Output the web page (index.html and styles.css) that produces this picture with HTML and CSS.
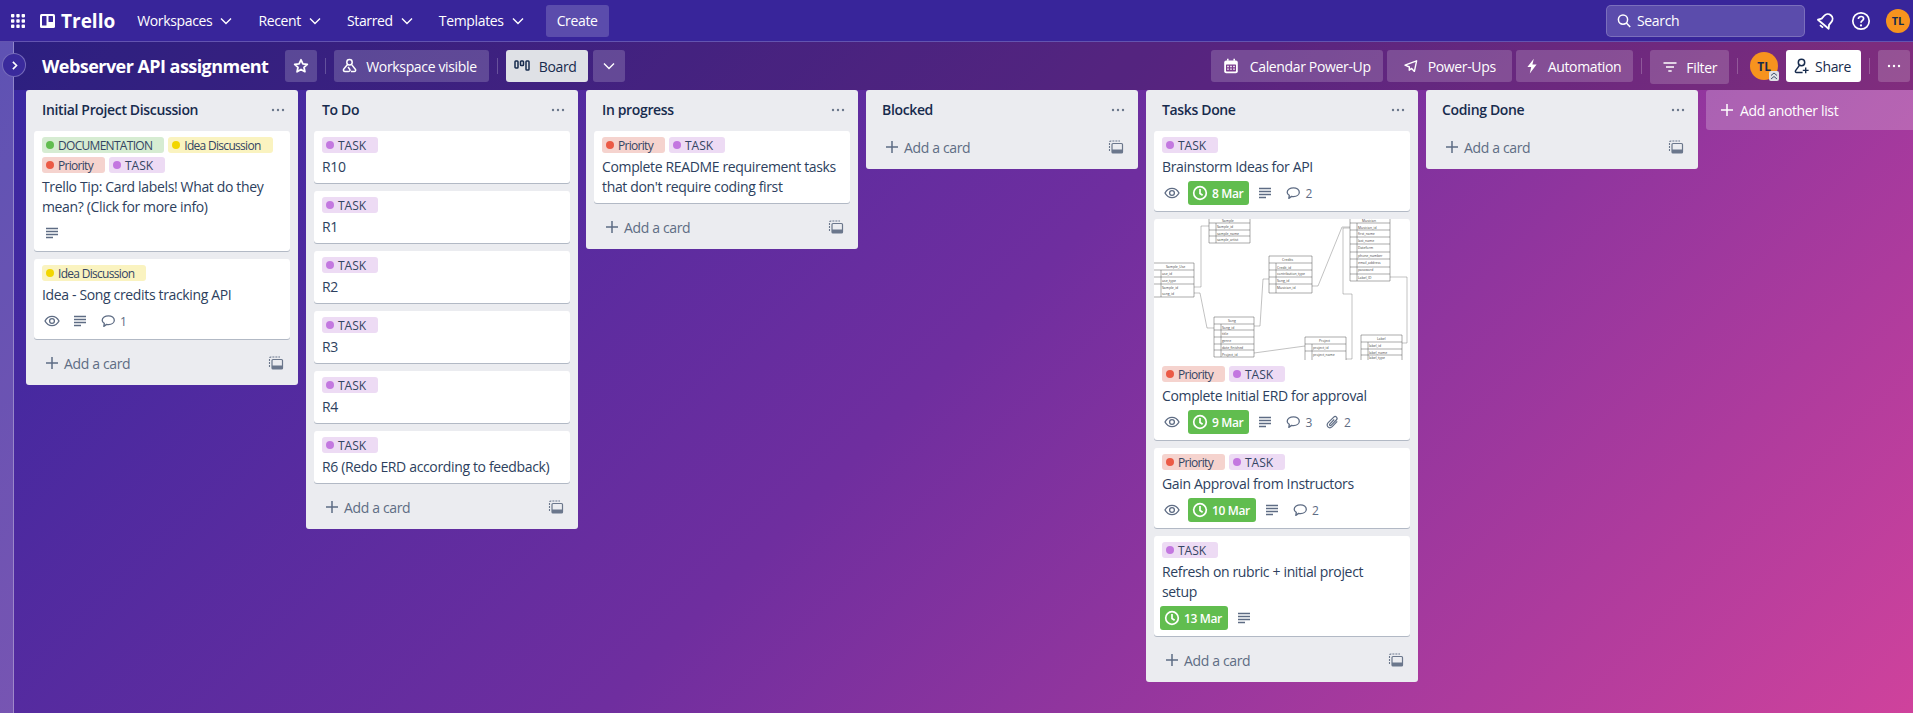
FILE: index.html
```html
<!DOCTYPE html>
<html lang="en">
<head>
    <meta charset="UTF-8">
    <title>Webserver API assignment | Trello</title>
    <link rel="stylesheet" href="styles.css">
</head>
<body>
    <svg class="sprite" xmlns="http://www.w3.org/2000/svg">
        <symbol id="i-chevron" viewBox="0 0 16 16"><path d="M3 5.500l5 5 5-5" fill="none" stroke="currentColor" stroke-width="1.400"/></symbol>
        <symbol id="i-star" viewBox="0 0 16 16"><path d="M8 1.800l1.900 4 4.400.5-3.300 3 .9 4.400L8 11.500l-3.900 2.200.9-4.400-3.300-3 4.400-.5z" fill="none" stroke="currentColor" stroke-width="1.800" stroke-linejoin="round"/></symbol>
        <symbol id="i-people" viewBox="0 0 16 16"><g fill="none" stroke="currentColor" stroke-width="1.500"><circle cx="7.500" cy="4.200" r="2.700"/><path d="M5.500 6.500L1.800 11c-.8 1-.3 2.500 1.200 2.500h3.500c1.500 0 2-1.200 1.200-2.300L6 9"/><path d="M9.700 6.600l3.600 4.600c.8 1 .2 2.300-1 2.300H9"/></g></symbol>
        <symbol id="i-board" viewBox="0 0 16 16"><g fill="none" stroke="currentColor" stroke-width="1.500"><rect x="1" y="3" width="3" height="7" rx=".8"/><rect x="6.500" y="3" width="3" height="4.500" rx=".8"/><rect x="12" y="3" width="3" height="9" rx=".8"/></g></symbol>
        <symbol id="i-calendar" viewBox="0 0 16 16"><path d="M4 .8h1.600v2H4zM10.400.8H12v2h-1.600z" fill="currentColor"/><rect x="1.200" y="2.400" width="13.600" height="12.800" rx="2" fill="currentColor"/><rect x="3" y="6.400" width="10" height="7" rx=".6" fill="#7b3c8f"/><path d="M4.200 7.800h1.600v1.400H4.200zM7.200 7.800h1.600v1.400H7.200zM10.200 7.800h1.600v1.400h-1.600zM4.200 10.400h1.600v1.400H4.200zM7.200 10.400h1.600v1.400H7.200zM10.200 10.400h1.600v1.400h-1.600z" fill="currentColor"/></symbol>
        <symbol id="i-rocket" viewBox="0 0 16 16"><path d="M2 7.200L13.600 2.800 11.400 13.400 8.600 10.400 6.200 12.200 6.400 9z" fill="none" stroke="currentColor" stroke-width="1.400" stroke-linejoin="round"/></symbol>
        <symbol id="i-bell" viewBox="0 0 20 20"><g transform="rotate(40 10 10)" fill="none" stroke="currentColor" stroke-width="1.800" stroke-linejoin="round"><path d="M10 2.500c-3 0-4.800 2.200-4.800 5v3.500L3 14.200h14L14.800 11V7.500c0-2.800-1.800-5-4.800-5z"/><path d="M8 17h4"/></g></symbol>
        <symbol id="i-bolt" viewBox="0 0 16 16"><path d="M9.800.8L3.400 9h3.800l-1.400 6.400L12.600 6.600H8.400z" fill="currentColor"/></symbol>
        <symbol id="i-filter" viewBox="0 0 16 16"><path d="M1.500 4h13M4 8h8M6.300 12h3.400" fill="none" stroke="currentColor" stroke-width="1.500"/></symbol>
        <symbol id="i-share" viewBox="0 0 16 16"><g fill="none" stroke="currentColor" stroke-width="1.500"><circle cx="7.500" cy="4.500" r="3.200"/><path d="M5.400 7.400L1.600 12.600c-.6.9 0 1.900 1 1.900h6"/></g><path d="M11 9.500h1.400v2.200h2.200v1.400h-2.200v2.200H11v-2.200H8.800v-1.400H11z" fill="currentColor"/></symbol>
        <symbol id="i-dots" viewBox="0 0 16 16"><g fill="currentColor"><circle cx="3" cy="8" r="1.200"/><circle cx="8" cy="8" r="1.200"/><circle cx="13" cy="8" r="1.200"/></g></symbol>
        <symbol id="i-search" viewBox="0 0 16 16"><g fill="none" stroke="currentColor" stroke-width="1.500"><circle cx="7" cy="6.600" r="4.600"/><path d="M10.400 10l3.800 4"/></g></symbol>
        <symbol id="i-help" viewBox="0 0 20 20"><circle cx="10" cy="10" r="8.200" fill="none" stroke="currentColor" stroke-width="1.700"/><path d="M7.400 8c0-1.600 1.200-2.500 2.700-2.500s2.500 1 2.500 2.200c0 1.900-2.600 2-2.600 4" fill="none" stroke="currentColor" stroke-width="1.700"/><circle cx="10" cy="14.400" r="1.100" fill="currentColor"/></symbol>
        <symbol id="i-eye" viewBox="0 0 16 16"><g fill="none" stroke="currentColor" stroke-width="1.300"><path d="M1 8c1.600-3 4-4.600 7-4.600S13.400 5 15 8c-1.600 3-4 4.600-7 4.600S2.600 11 1 8z"/><circle cx="8" cy="8" r="2.400"/></g></symbol>
        <symbol id="i-desc" viewBox="0 0 16 16"><path d="M2 3.500h12M2 6.500h12M2 9.500h12M2 12.500h7" fill="none" stroke="currentColor" stroke-width="1.300"/></symbol>
        <symbol id="i-comment" viewBox="0 0 16 16"><path d="M8.500 2.800c3.200 0 5.800 1.900 5.800 4.400s-2.600 4.400-5.800 4.400c-.7 0-1.300-.1-1.900-.2l-2.800 2 .5-3C2.900 9.600 2.200 8.500 2.200 7.200c0-2.500 3-4.400 6.300-4.400z" fill="none" stroke="currentColor" stroke-width="1.300" stroke-linejoin="round"/></symbol>
        <symbol id="i-clip" viewBox="0 0 16 16"><path d="M13.200 7.400l-5 5.200c-1.300 1.300-3.200 1.400-4.300.3s-1-2.900.3-4.200l5.300-5.400c.9-.9 2.200-1 3-.2s.7 2-.2 2.900l-5 5.200c-.5.5-1.100.5-1.500.1s-.3-1 .2-1.500l4.200-4.300" fill="none" stroke="currentColor" stroke-width="1.200"/></symbol>
        <symbol id="i-clock" viewBox="0 0 16 16"><g fill="none" stroke="currentColor" stroke-width="1.700"><circle cx="8" cy="8" r="6.300"/><path d="M8 4v4.500l2.600 1.800"/></g></symbol>
        <symbol id="i-plus" viewBox="0 0 16 16"><path d="M8 2v12M2 8h12" fill="none" stroke="currentColor" stroke-width="1.500"/></symbol>
        <symbol id="i-template" viewBox="0 0 16 16"><path d="M1.500 12V3.500c0-1 .5-1.500 1.500-1.500h9" fill="none" stroke="currentColor" stroke-width="1.100" stroke-dasharray="2 1"/><rect x="4" y="4.500" width="10.500" height="9.500" rx="1" fill="none" stroke="currentColor" stroke-width="1.200"/><rect x="4" y="10.500" width="10.500" height="3.500" fill="currentColor"/></symbol>
    </svg>

    <header class="topnav">
        <svg class="apps" viewBox="0 0 14 14"><g fill="#fff"><rect width="3.400" height="3.400" rx=".8"/><rect x="5.300" width="3.400" height="3.400" rx=".8"/><rect x="10.600" width="3.400" height="3.400" rx=".8"/><rect y="5.300" width="3.400" height="3.400" rx=".8"/><rect x="5.300" y="5.300" width="3.400" height="3.400" rx=".8"/><rect x="10.600" y="5.300" width="3.400" height="3.400" rx=".8"/><rect y="10.600" width="3.400" height="3.400" rx=".8"/><rect x="5.300" y="10.600" width="3.400" height="3.400" rx=".8"/><rect x="10.600" y="10.600" width="3.400" height="3.400" rx=".8"/></g></svg>
        <div class="logo">
            <svg class="logo-mark" viewBox="0 0 15 14"><rect width="15" height="14" rx="1.500" fill="#fff"/><rect x="2" y="2" width="4.500" height="9.500" rx=".6" fill="#38259a"/><rect x="8.500" y="2" width="4.500" height="6" rx=".6" fill="#38259a"/></svg>
            <span>Trello</span>
        </div>
        <nav class="nav-menu">
            <a class="nav-item">Workspaces <svg class="ico"><use href="#i-chevron"/></svg></a>
            <a class="nav-item">Recent <svg class="ico"><use href="#i-chevron"/></svg></a>
            <a class="nav-item">Starred <svg class="ico"><use href="#i-chevron"/></svg></a>
            <a class="nav-item">Templates <svg class="ico"><use href="#i-chevron"/></svg></a>
            <a class="create-btn">Create</a>
        </nav>
        <div class="nav-right">
            <div class="search"><svg class="ico"><use href="#i-search"/></svg><span>Search</span></div>
            <svg class="nav-icon bell"><use href="#i-bell"/></svg>
            <svg class="nav-icon help"><use href="#i-help"/></svg>
            <div class="avatar avatar-small">TL</div>
        </div>
    </header>

    <div class="workspace">
        <aside class="sidebar"></aside>
        <button class="sidebar-toggle"><svg viewBox="0 0 16 16"><path d="M6 3.500L10.500 8 6 12.500" fill="none" stroke="#fff" stroke-width="2"/></svg></button>

        <main class="board">
            <div class="board-header">
                <div class="header-group">
                    <h1 class="board-title">Webserver API assignment</h1>
                    <a class="hbtn icon-btn"><svg class="ico"><use href="#i-star"/></svg></a>
                    <span class="sep"></span>
                    <a class="hbtn"><svg class="ico"><use href="#i-people"/></svg>Workspace visible</a>
                    <span class="sep"></span>
                    <a class="hbtn hbtn-light"><svg class="ico"><use href="#i-board"/></svg>Board</a>
                    <a class="hbtn icon-btn"><svg class="ico"><use href="#i-chevron"/></svg></a>
                </div>
                <div class="header-group">
                    <a class="hbtn calendar-btn"><svg class="ico"><use href="#i-calendar"/></svg>Calendar Power-Up</a>
                    <a class="hbtn powerups-btn"><svg class="ico"><use href="#i-rocket"/></svg>Power-Ups</a>
                    <a class="hbtn"><svg class="ico"><use href="#i-bolt"/></svg>Automation</a>
                    <span class="sep"></span>
                    <a class="hbtn filter-btn"><svg class="ico"><use href="#i-filter"/></svg>Filter</a>
                    <span class="sep"></span>
                    <div class="avatar avatar-member">TL<svg class="admin-mark" viewBox="0 0 10 10"><rect width="10" height="10" rx="2" fill="#dfe1e6"/><path d="M2 4.500l3-2.500 3 2.500M2 8l3-2.500L8 8" fill="none" stroke="#42526e" stroke-width="1"/></svg></div>
                    <a class="hbtn hbtn-white"><svg class="ico"><use href="#i-share"/></svg>Share</a>
                    <span class="sep"></span>
                    <a class="hbtn icon-btn last-btn"><svg class="ico"><use href="#i-dots"/></svg></a>
                </div>
            </div>

            <div class="lists">
                <section class="list">
                    <div class="list-head"><h2>Initial Project Discussion</h2><svg class="ico"><use href="#i-dots"/></svg></div>
                    <article class="card">
                        <div class="labels">
                            <span class="label green">DOCUMENTATION</span>
                            <span class="label yellow">Idea Discussion</span>
                            <span class="label red">Priority</span>
                            <span class="label purple">TASK</span>
                        </div>
                        <p class="card-title">Trello Tip: Card labels! What do they mean? (Click for more info)</p>
                        <div class="badges"><span class="badge"><svg class="ico"><use href="#i-desc"/></svg></span></div>
                    </article>
                    <article class="card">
                        <div class="labels"><span class="label yellow">Idea Discussion</span></div>
                        <p class="card-title">Idea - Song credits tracking API</p>
                        <div class="badges">
                            <span class="badge"><svg class="ico"><use href="#i-eye"/></svg></span>
                            <span class="badge"><svg class="ico"><use href="#i-desc"/></svg></span>
                            <span class="badge"><svg class="ico"><use href="#i-comment"/></svg><em>1</em></span>
                        </div>
                    </article>
                    <div class="add-card"><svg class="ico"><use href="#i-plus"/></svg><span>Add a card</span><svg class="ico tpl"><use href="#i-template"/></svg></div>
                </section>

                <section class="list">
                    <div class="list-head"><h2>To Do</h2><svg class="ico"><use href="#i-dots"/></svg></div>
                    <article class="card"><div class="labels"><span class="label purple">TASK</span></div><p class="card-title">R10</p></article>
                    <article class="card"><div class="labels"><span class="label purple">TASK</span></div><p class="card-title">R1</p></article>
                    <article class="card"><div class="labels"><span class="label purple">TASK</span></div><p class="card-title">R2</p></article>
                    <article class="card"><div class="labels"><span class="label purple">TASK</span></div><p class="card-title">R3</p></article>
                    <article class="card"><div class="labels"><span class="label purple">TASK</span></div><p class="card-title">R4</p></article>
                    <article class="card"><div class="labels"><span class="label purple">TASK</span></div><p class="card-title">R6 (Redo ERD according to feedback)</p></article>
                    <div class="add-card"><svg class="ico"><use href="#i-plus"/></svg><span>Add a card</span><svg class="ico tpl"><use href="#i-template"/></svg></div>
                </section>

                <section class="list">
                    <div class="list-head"><h2>In progress</h2><svg class="ico"><use href="#i-dots"/></svg></div>
                    <article class="card">
                        <div class="labels"><span class="label red">Priority</span><span class="label purple">TASK</span></div>
                        <p class="card-title">Complete README requirement tasks that don't require coding first</p>
                    </article>
                    <div class="add-card"><svg class="ico"><use href="#i-plus"/></svg><span>Add a card</span><svg class="ico tpl"><use href="#i-template"/></svg></div>
                </section>

                <section class="list">
                    <div class="list-head"><h2>Blocked</h2><svg class="ico"><use href="#i-dots"/></svg></div>
                    <div class="add-card"><svg class="ico"><use href="#i-plus"/></svg><span>Add a card</span><svg class="ico tpl"><use href="#i-template"/></svg></div>
                </section>

                <section class="list">
                    <div class="list-head"><h2>Tasks Done</h2><svg class="ico"><use href="#i-dots"/></svg></div>
                    <article class="card">
                        <div class="labels"><span class="label purple">TASK</span></div>
                        <p class="card-title">Brainstorm Ideas for API</p>
                        <div class="badges">
                            <span class="badge"><svg class="ico"><use href="#i-eye"/></svg></span>
                            <span class="due"><svg class="ico"><use href="#i-clock"/></svg>8 Mar</span>
                            <span class="badge"><svg class="ico"><use href="#i-desc"/></svg></span>
                            <span class="badge"><svg class="ico"><use href="#i-comment"/></svg><em>2</em></span>
                        </div>
                    </article>
                    <article class="card">
                        <div class="card-cover">
                            <svg class="erd" viewBox="0 0 256 141">
                                <path class="erd-links" d="M40 68h7V7h8M40 74h6l7 35h7M100 107h6l3-47h6M158 67h6l24-59h8M100 134l51-7M192 140h6V75h-9V9h7M236 58h17v66h-5"/>
                                <g class="erd-tables">
                                    <path d="M55 0v24h41V0M55 4h41M55 11h41M55 17h41M62 4v20"/>
                                    <path d="M0 44h40v34H0M0 51h40M0 58h40M0 65h40M7 51v27"/>
                                    <path d="M115 37h43v37h-43zM115 44h43M115 51h43M115 58h43M115 65h43M122 44v30"/>
                                    <path d="M196 0v62h40V0M196 4h40M196 11h40M196 18h40M196 25h40M196 33h40M196 40h40M196 48h40M196 55h40M203 4v58"/>
                                    <path d="M60 98h40v40H60zM60 105h40M60 111h40M60 118h40M60 125h40M60 131h40M67 105v33"/>
                                    <path d="M151 141v-23h41v23M151 125h41M151 132h41M158 125v16"/>
                                    <path d="M207 141v-25h41v25M207 123h41M207 130h41M207 136h41M214 123v18"/>
                                </g>
                                <g class="erd-text">
                                    <text x="68" y="3">Sample</text><text x="63" y="9">Sample_id</text><text x="63" y="15.500">sample_name</text><text x="63" y="22">sample_artist</text>
                                    <text x="12" y="49">Sample_Use</text><text x="8" y="56">use_id</text><text x="8" y="63">use_type</text><text x="8" y="70">Sample_id</text><text x="8" y="76">song_id</text>
                                    <text x="128" y="42">Credits</text><text x="123" y="49.500">Credit_id</text><text x="123" y="56">contribution_type</text><text x="123" y="63">Song_id</text><text x="123" y="70">Musician_id</text>
                                    <text x="208" y="3">Musician</text><text x="204" y="9.500">Musician_id</text><text x="204" y="16">first_name</text><text x="204" y="23">last_name</text><text x="204" y="30">Dateform</text><text x="204" y="38">phone_number</text><text x="204" y="45">email_address</text><text x="204" y="52">password</text><text x="204" y="60">Label_ID</text>
                                    <text x="74" y="103">Song</text><text x="68" y="110">Song_id</text><text x="68" y="116">title</text><text x="68" y="123">genre</text><text x="68" y="130">date_finished</text><text x="68" y="136.500">Project_id</text>
                                    <text x="165" y="123">Project</text><text x="159" y="130">project_id</text><text x="159" y="137">project_name</text>
                                    <text x="223" y="121">Label</text><text x="215" y="128">label_id</text><text x="215" y="134.500">label_name</text><text x="215" y="140">label_type</text>
                                </g>
                            </svg>
                        </div>
                        <div class="labels"><span class="label red">Priority</span><span class="label purple">TASK</span></div>
                        <p class="card-title">Complete Initial ERD for approval</p>
                        <div class="badges">
                            <span class="badge"><svg class="ico"><use href="#i-eye"/></svg></span>
                            <span class="due"><svg class="ico"><use href="#i-clock"/></svg>9 Mar</span>
                            <span class="badge"><svg class="ico"><use href="#i-desc"/></svg></span>
                            <span class="badge"><svg class="ico"><use href="#i-comment"/></svg><em>3</em></span>
                            <span class="badge"><svg class="ico"><use href="#i-clip"/></svg><em>2</em></span>
                        </div>
                    </article>
                    <article class="card">
                        <div class="labels"><span class="label red">Priority</span><span class="label purple">TASK</span></div>
                        <p class="card-title">Gain Approval from Instructors</p>
                        <div class="badges">
                            <span class="badge"><svg class="ico"><use href="#i-eye"/></svg></span>
                            <span class="due"><svg class="ico"><use href="#i-clock"/></svg>10 Mar</span>
                            <span class="badge"><svg class="ico"><use href="#i-desc"/></svg></span>
                            <span class="badge"><svg class="ico"><use href="#i-comment"/></svg><em>2</em></span>
                        </div>
                    </article>
                    <article class="card">
                        <div class="labels"><span class="label purple">TASK</span></div>
                        <p class="card-title">Refresh on rubric + initial project<br>setup</p>
                        <div class="badges">
                            <span class="due"><svg class="ico"><use href="#i-clock"/></svg>13 Mar</span>
                            <span class="badge"><svg class="ico"><use href="#i-desc"/></svg></span>
                        </div>
                    </article>
                    <div class="add-card"><svg class="ico"><use href="#i-plus"/></svg><span>Add a card</span><svg class="ico tpl"><use href="#i-template"/></svg></div>
                </section>

                <section class="list">
                    <div class="list-head"><h2>Coding Done</h2><svg class="ico"><use href="#i-dots"/></svg></div>
                    <div class="add-card"><svg class="ico"><use href="#i-plus"/></svg><span>Add a card</span><svg class="ico tpl"><use href="#i-template"/></svg></div>
                </section>

                <a class="add-list"><svg class="ico"><use href="#i-plus"/></svg>Add another list</a>
            </div>
        </main>
    </div>
</body>
</html>
```

FILE: styles.css
```css
:root {
    --text: #172b4d;
    --card-text: #2d3f5e;
    --muted: #5e6c84;
    --list-bg: #ebecf0;
    --btn-bg: rgba(255, 255, 255, 0.18);
}

* {
    box-sizing: border-box;
    margin: 0;
    padding: 0;
}

html, body {
    height: 100%;
}

body {
    font-family: "Open Sans", "Noto Sans", sans-serif;
    font-size: 14px;
    letter-spacing: -0.35px;
    color: var(--text);
    background: linear-gradient(135deg, #3527a0 0%, #6f2e9f 50%, #cf429c 100%);
    display: flex;
    flex-direction: column;
    overflow: hidden;
}

.sprite {
    display: none;
}

.ico {
    width: 16px;
    height: 16px;
    flex: none;
}

/* top nav */
.topnav {
    height: 42px;
    flex: none;
    display: flex;
    align-items: center;
    padding: 0 3px 0 11px;
    background-color: #38259a;
    border-bottom: 1px solid rgba(255, 255, 255, 0.22);
    color: #fff;
}

.apps {
    width: 14px;
    height: 14px;
}

.logo {
    display: flex;
    align-items: center;
    gap: 6px;
    margin-left: 15px;
    font-size: 19px;
    font-weight: 700;
    letter-spacing: 0;
}

.logo-mark {
    width: 15px;
    height: 14px;
}

.nav-menu {
    display: flex;
    align-items: center;
    margin-left: 22px;
}

.nav-item {
    display: flex;
    align-items: center;
    gap: 6px;
    margin-right: 24px;
}

.create-btn {
    height: 32px;
    padding: 0 11px;
    line-height: 32px;
    border-radius: 3px;
    background: var(--btn-bg);
    margin-left: -4px;
}

.nav-right {
    margin-left: auto;
    display: flex;
    align-items: center;
}

.search {
    width: 199px;
    height: 32px;
    display: flex;
    align-items: center;
    gap: 5px;
    padding-left: 9px;
    border-radius: 5px;
    background: rgba(255, 255, 255, 0.18);
    border: 1px solid rgba(255, 255, 255, 0.2);
}

.nav-icon {
    width: 20px;
    height: 20px;
    color: #fff;
}

.bell {
    margin-left: 11px;
}

.help {
    margin-left: 15px;
}

.avatar {
    border-radius: 50%;
    background: #f7931e;
    color: #172b4d;
    font-weight: 700;
    display: flex;
    align-items: center;
    justify-content: center;
    letter-spacing: 0;
}

.avatar-small {
    width: 24px;
    height: 24px;
    font-size: 11px;
    margin-left: 15px;
}

/* page under the nav */
.workspace {
    flex: 1;
    min-height: 0;
    display: flex;
    position: relative;
}

.sidebar {
    width: 14px;
    flex: none;
    background: rgba(255, 255, 255, 0.2);
    border-right: 1px solid rgba(255, 255, 255, 0.3);
}

.sidebar-toggle {
    position: absolute;
    left: 2px;
    top: 11px;
    width: 24px;
    height: 24px;
    border-radius: 50%;
    background: #3a2a9c;
    border: 1px solid rgba(255, 255, 255, 0.3);
    display: flex;
    align-items: center;
    justify-content: center;
}

.sidebar-toggle svg {
    width: 13px;
    height: 13px;
}

.board {
    flex: 1;
    min-width: 0;
    display: flex;
    flex-direction: column;
}

.board-header {
    height: 48px;
    flex: none;
    display: flex;
    align-items: center;
    justify-content: space-between;
    padding: 0 3px 0 28px;
    background: rgba(0, 0, 0, 0.2);
    color: #fff;
}

.header-group {
    display: flex;
    align-items: center;
}

.board-title {
    font-size: 18px;
    font-weight: 700;
    letter-spacing: -0.55px;
    margin-right: 17px;
}

.hbtn {
    height: 32px;
    display: flex;
    align-items: center;
    gap: 8px;
    padding: 0 12px 0 8px;
    margin-right: 4px;
    border-radius: 3px;
    background: var(--btn-bg);
}

.icon-btn {
    width: 32px;
    padding: 0;
    justify-content: center;
}

.last-btn {
    margin-right: 0;
}

.calendar-btn {
    padding-left: 12px;
    gap: 11px;
}

.powerups-btn {
    padding: 0 16px;
    gap: 9px;
}

.hbtn-light {
    background: #dfe1e6;
    color: var(--text);
    gap: 9px;
    margin-right: 5px;
}

.hbtn-white {
    background: #fff;
    color: var(--text);
    gap: 5px;
    padding-right: 10px;
}

.filter-btn {
    height: 34px;
    padding-left: 12px;
    position: relative;
    top: 1px;
}

.sep {
    width: 1px;
    height: 16px;
    margin: 0 8px 0 4px;
    background: rgba(255, 255, 255, 0.22);
}

.avatar-member {
    width: 28px;
    height: 28px;
    font-size: 12px;
    position: relative;
    margin: 0 8px 0 4px;
}

.admin-mark {
    position: absolute;
    right: -1px;
    bottom: -1px;
    width: 10px;
    height: 10px;
}

/* lists */
.lists {
    flex: 1;
    min-height: 0;
    display: flex;
    align-items: flex-start;
    gap: 8px;
    padding-left: 12px;
    overflow: hidden;
}

.list {
    width: 272px;
    flex: none;
    padding: 0 8px 6px;
    border-radius: 3px;
    background: var(--list-bg);
}

.list-head {
    height: 41px;
    display: flex;
    align-items: center;
    justify-content: space-between;
    padding: 0 4px 2px 8px;
    color: #6b778c;
}

.list-head h2 {
    font-size: 14px;
    font-weight: 600;
    color: var(--text);
}

.card {
    padding: 6px 8px 6px;
    margin-bottom: 8px;
    border-radius: 3px;
    background: #fff;
    box-shadow: 0 1px 0 rgba(9, 30, 66, 0.25);
}

.card-title {
    line-height: 20px;
    color: var(--card-text);
}

.card-cover {
    margin: -6px -8px 6px;
    height: 141px;
    border-radius: 3px 3px 0 0;
    overflow: hidden;
}

.erd {
    display: block;
    width: 256px;
    height: 141px;
}

.erd-links {
    fill: none;
    stroke: #666;
    stroke-width: 0.4;
}

.erd-tables {
    fill: none;
    stroke: #555;
    stroke-width: 0.5;
}

.erd-text {
    font-size: 3.400px;
    letter-spacing: 0;
    fill: #444;
}

.labels {
    display: flex;
    flex-wrap: wrap;
    gap: 4px;
    margin-bottom: 4px;
}

.label {
    position: relative;
    height: 16px;
    line-height: 17px;
    padding: 0 12px 0 16px;
    border-radius: 3px;
    font-size: 12px;
    letter-spacing: -0.7px;
    color: #344563;
}

.label::before {
    content: "";
    position: absolute;
    left: 4px;
    top: 4px;
    width: 8px;
    height: 8px;
    border-radius: 50%;
}

.green { background: #d6ecd2; }
.green::before { background: #61bd4f; }
.yellow { background: #faf3c0; }
.yellow::before { background: #f2d600; }
.red { background: #f5d3ce; }
.red::before { background: #eb5a46; }
.purple { background: #eddbf4; letter-spacing: 0; }
.purple::before { background: #c377e0; }

.badges {
    display: flex;
    margin: 4px 0 0 -2px;
    height: 24px;
    color: var(--muted);
}

.badge {
    display: flex;
    align-items: center;
    margin-right: 4px;
}

.badge .ico {
    width: 24px;
    padding: 2px 4px;
    height: 20px;
}

.badge em {
    font-style: normal;
    font-size: 12px;
    padding-right: 4px;
}

.due {
    display: flex;
    align-items: center;
    gap: 4px;
    padding: 0 6px 0 4px;
    margin-right: 4px;
    border-radius: 3px;
    background: #61bd4f;
    color: #fff;
    font-size: 12px;
    font-weight: 600;
}

.add-card {
    height: 32px;
    display: flex;
    align-items: center;
    gap: 4px;
    padding: 0 6px 0 10px;
    color: var(--muted);
}

.add-card .tpl {
    margin-left: auto;
    color: #6b778c;
}

.add-list {
    width: 272px;
    flex: none;
    height: 40px;
    display: flex;
    align-items: center;
    gap: 5px;
    padding: 0 13px;
    border-radius: 3px;
    background: rgba(255, 255, 255, 0.22);
    color: #fff;
}
```
